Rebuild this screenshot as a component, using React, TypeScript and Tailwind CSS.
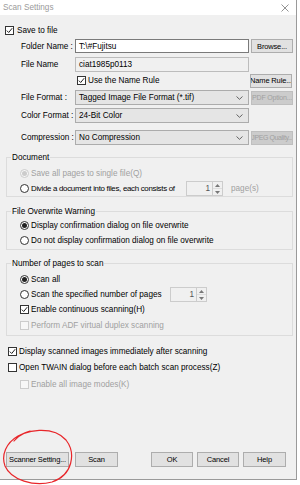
import React from 'react';

function Check({ checked = false, disabled = false }: { checked?: boolean; disabled?: boolean }) {
  return (
    <span
      className={`w-[9px] h-[9px] shrink-0 border flex items-center justify-center ${
        disabled ? 'border-[#cccccc] bg-[#f7f7f7]' : 'border-[#333333] bg-white'
      }`}
    >
      {checked && (
        <svg width="7" height="7" viewBox="0 0 7 7">
          <path d="M0.8 3.6 L2.7 5.5 L6.2 1.2" fill="none" stroke="#222" strokeWidth="1" />
        </svg>
      )}
    </span>
  );
}

function Radio({ checked = false, disabled = false }: { checked?: boolean; disabled?: boolean }) {
  return (
    <span
      className={`w-[9px] h-[9px] shrink-0 rounded-full border flex items-center justify-center ${
        disabled ? 'border-[#cccccc] bg-[#f7f7f7]' : 'border-[#333333] bg-white'
      }`}
    >
      {checked && (
        <span className={`w-[5px] h-[5px] rounded-full ${disabled ? 'bg-[#cccccc]' : 'bg-[#222]'}`} />
      )}
    </span>
  );
}

function Btn({ label, disabled = false, className = '' }: { label: string; disabled?: boolean; className?: string }) {
  return (
    <div
      className={`h-[14px] shrink-0 overflow-hidden flex items-center justify-center border ${
        disabled
          ? 'bg-[#cccccc] border-[#bfbfbf] text-[#a0a0a0] text-[7px] tracking-[-0.2px]'
          : 'bg-[#e1e1e1] border-[#adadad] text-black text-[7.5px] tracking-[-0.15px]'
      } ${className}`}
    >
      {label}
    </div>
  );
}

function Select({ value }: { value: string }) {
  return (
    <div className="w-[174px] h-[15px] shrink-0 bg-[#e5e5e5] border border-[#acacac] flex items-center pl-[3px] pr-[5px]">
      <span className="flex-1">{value}</span>
      <svg width="7" height="4" viewBox="0 0 7 4">
        <path d="M0.5 0.5 L3.5 3.3 L6.5 0.5" fill="none" stroke="#555" strokeWidth="0.9" />
      </svg>
    </div>
  );
}

function Spin() {
  return (
    <div className="w-[37px] h-[15px] shrink-0 border border-[#cccccc] bg-[#f0f0f0] flex">
      <span className="flex-1 text-right pr-[2px] text-[#555] leading-[13px]">1</span>
      <div className="w-[10px] border-l border-[#cccccc] flex flex-col">
        <div className="flex-1 flex items-center justify-center border-b border-[#dddddd]">
          <svg width="5" height="3" viewBox="0 0 5 3"><path d="M0 3 L2.5 0 L5 3Z" fill="#777" /></svg>
        </div>
        <div className="flex-1 flex items-center justify-center">
          <svg width="5" height="3" viewBox="0 0 5 3"><path d="M0 0 L2.5 3 L5 0Z" fill="#777" /></svg>
        </div>
      </div>
    </div>
  );
}

function Group({ title, className = '', children }: { title: string; className?: string; children: React.ReactNode }) {
  return (
    <fieldset className={`border border-[#dcdcdc] ml-[6px] w-[287px] ${className}`}>
      <legend className="ml-[4px] px-[1px] leading-[11px]">{title}</legend>
      {children}
    </fieldset>
  );
}

export default function App() {
  return (
    <div
      className="relative w-[300px] h-[485px] bg-white overflow-hidden text-[8.2px] leading-[11px] text-black whitespace-nowrap"
      style={{ fontFamily: '"Liberation Sans", Arial, sans-serif' }}
    >
      <div className="w-[297px] h-[480px] border-r border-b border-[#9a9a9a] flex flex-col">
        {/* Title bar */}
        <div className="h-[15px] bg-white flex items-center justify-between pl-[3px] pr-[7px]">
          <span className="text-[#9a9a9a]">Scan Settings</span>
          <svg width="8" height="8" viewBox="0 0 8 8">
            <path d="M0.5 0.5 L7.5 7.5 M7.5 0.5 L0.5 7.5" stroke="#777" strokeWidth="0.8" />
          </svg>
        </div>

        {/* Body */}
        <div className="flex-1 bg-[#f0f0f0] flex flex-col">
          <div className="mt-[10px] ml-[5px] flex items-center gap-[3px] h-[10px]">
            <Check checked />
            <span>Save to file</span>
          </div>

          <div className="mt-[4px] ml-[21px] flex items-center h-[14px]">
            <span className="w-[54px] shrink-0">Folder Name :</span>
            <div className="w-[174px] h-[14px] shrink-0 bg-white border border-[#7a7a7a] flex items-center pl-[3px]">T:\#Fujitsu</div>
            <Btn label="Browse..." className="ml-[2px] w-[42px]" />
          </div>

          <div className="mt-[4px] ml-[21px] flex items-center h-[15px]">
            <span className="w-[54px] shrink-0">File Name</span>
            <div className="w-[174px] h-[15px] shrink-0 bg-[#f0f0f0] border border-[#bcbcbc] flex items-center pl-[3px]">ciat1985p0113</div>
          </div>

          <div className="mt-[2px] ml-[77px] flex items-center h-[13px]">
            <Check checked />
            <span className="ml-[2px] w-[162px] shrink-0">Use the Name Rule</span>
            <Btn label="Name Rule..." className="w-[42px] h-[13px]" />
          </div>

          <div className="mt-[3px] ml-[21px] flex items-center h-[15px]">
            <span className="w-[54px] shrink-0">File Format :</span>
            <Select value="Tagged Image File Format (*.tif)" />
            <Btn label="PDF Option..." disabled className="ml-[2px] w-[42px]" />
          </div>

          <div className="mt-[3px] ml-[21px] flex items-center h-[15px]">
            <span className="w-[54px] shrink-0">Color Format :</span>
            <Select value="24-Bit Color" />
          </div>

          <div className="mt-[7px] ml-[21px] flex items-center h-[15px]">
            <span className="w-[54px] shrink-0">Compression :</span>
            <Select value="No Compression" />
            <Btn label="JPEG Quality..." disabled className="ml-[2px] w-[42px] tracking-[-0.4px]" />
          </div>

          <Group title="Document" className="mt-[7px] h-[45px]">
            <div className="ml-[13px] mt-[5px] flex items-center gap-[2px] h-[10px] text-[#a0a0a0]">
              <Radio checked disabled />
              <span>Save all pages to single file(Q)</span>
            </div>
            <div className="ml-[13px] mt-[3px] flex items-center h-[15px]">
              <Radio />
              <span className="ml-[2px] w-[155px] shrink-0 text-[7.9px] tracking-[-0.3px]">Divide a document into files, each consists of</span>
              <Spin />
              <span className="ml-[8px] text-[#a0a0a0]">page(s)</span>
            </div>
          </Group>

          <Group title="File Overwrite Warning" className="mt-[9px] h-[44px]">
            <div className="ml-[13px] mt-[3px] flex items-center gap-[2px] h-[11px]">
              <Radio checked />
              <span>Display confirmation dialog on file overwrite</span>
            </div>
            <div className="ml-[13px] mt-[4px] flex items-center gap-[2px] h-[11px]">
              <Radio />
              <span>Do not display confirmation dialog on file overwrite</span>
            </div>
          </Group>

          <Group title="Number of pages to scan" className="mt-[8px] h-[78px]">
            <div className="ml-[13px] mt-[5px] flex items-center gap-[2px] h-[11px]">
              <Radio checked />
              <span>Scan all</span>
            </div>
            <div className="ml-[13px] mt-[2px] flex items-center h-[15px]">
              <Radio />
              <span className="ml-[2px] w-[139px] shrink-0">Scan the specified number of pages</span>
              <Spin />
            </div>
            <div className="ml-[13px] mt-[2px] flex items-center gap-[2px] h-[11px]">
              <Check checked />
              <span>Enable continuous scanning(H)</span>
            </div>
            <div className="ml-[13px] mt-[5px] flex items-center gap-[2px] h-[11px] text-[#a0a0a0]">
              <Check disabled />
              <span>Perform ADF virtual duplex scanning</span>
            </div>
          </Group>

          <div className="mt-[10px] ml-[8px] flex items-center gap-[2px] h-[11px]">
            <Check checked />
            <span>Display scanned images immediately after scanning</span>
          </div>
          <div className="mt-[5px] ml-[8px] flex items-center gap-[2px] h-[11px]">
            <Check />
            <span>Open TWAIN dialog before each batch scan process(Z)</span>
          </div>
          <div className="mt-[6px] ml-[20px] flex items-center gap-[2px] h-[11px] text-[#a0a0a0]">
            <Check disabled />
            <span>Enable all image modes(K)</span>
          </div>

          <div className="mt-auto mb-[12px] ml-[6px] flex items-center h-[15px]">
            <Btn label="Scanner Setting..." className="w-[63px] h-[15px] tracking-[-0.3px]" />
            <Btn label="Scan" className="ml-[6px] w-[43px] h-[15px]" />
            <Btn label="OK" className="ml-[33px] w-[42px] h-[15px]" />
            <Btn label="Cancel" className="ml-[4px] w-[42px] h-[15px]" />
            <Btn label="Help" className="ml-[4px] w-[43px] h-[15px]" />
          </div>
        </div>
      </div>

      {/* hand-drawn annotation */}
      <svg className="absolute left-0 top-0 pointer-events-none" width="300" height="485" viewBox="0 0 300 485">
        <path
          d="M14 441 C 24 428, 54 426, 66 440 C 76 453, 73 475, 52 482 C 34 487, 11 480, 5 466 C 1 455, 6 443, 18 436 C 22 434, 26 432, 30 431"
          fill="none"
          stroke="#e8262a"
          strokeWidth="1.2"
          strokeLinecap="round"
        />
      </svg>
    </div>
  );
}
